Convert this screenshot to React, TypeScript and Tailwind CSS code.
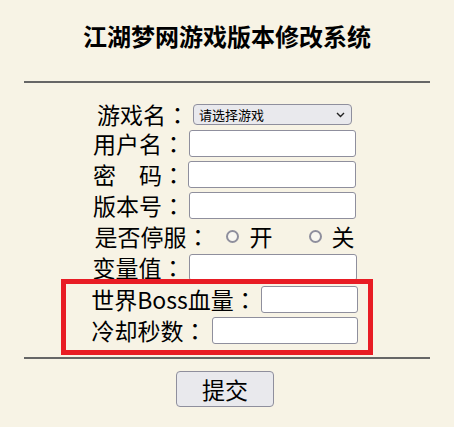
import React from "react";

const font = { fontFamily: '"Noto Sans CJK SC", "Noto Sans", sans-serif' };
const jp = { fontFamily: '"Noto Sans CJK JP", "Noto Sans CJK SC", sans-serif' };

function TextInput({ w }: { w: string }) {
  return (
    <input
      type="text"
      className={`${w} h-[27px] bg-white border border-[#8f8f9d] rounded-[3px] outline-none`}
    />
  );
}

function Radio() {
  return <span className="inline-block w-[13px] h-[13px] rounded-full border-2 border-[#8f8f9d] bg-[#f9f7f0]" />;
}

function Label({ text, w }: { text: string; w?: string }) {
  return (
    <span className={`${w ?? ""} flex items-center whitespace-nowrap h-[23px] leading-[23px]`}>
      <span>{text}</span>
      <span className="inline-block h-[23px] leading-[23px]" style={jp}>：</span>
    </span>
  );
}

export default function App() {
  return (
    <div
      className="relative w-[454px] h-[427px] bg-[#f7f3e5] text-black overflow-hidden"
      style={font}
    >
      <div className="pt-[22px] text-center text-[24px] leading-[28px] font-bold">江湖梦网游戏版本修改系统</div>
      <div className="mt-[31px] mx-[24px] border-t-2 border-[#666]" />

      <div className="flex flex-col pr-[5px] text-[23px]">
        <div className="mt-[18px] h-[27px] flex items-center justify-center">
          <Label text="游戏名" w="w-[92px]" />
          <div className="ml-[4px] w-[159px] h-[21px] flex items-center justify-between pl-[5px] pr-[6px] bg-[#e9e9ed] border border-[#8f8f9d] rounded-[4px] text-[13px] leading-[16px]">
            <span>请选择游戏</span>
            <svg width="9" height="6" viewBox="0 0 9 6" fill="none">
              <path d="M1 1l3.5 3.5L8 1" stroke="#222" strokeWidth="1.4" />
            </svg>
          </div>
        </div>
        <div className="mt-[2px] h-[27px] flex items-center justify-center">
          <Label text="用户名" w="w-[92px]" />
          <div className="ml-[4px]"><TextInput w="w-[167px]" /></div>
        </div>
        <div className="mt-[4px] h-[27px] flex items-center justify-center">
          <Label text="密　码" w="w-[92px]" />
          <div className="ml-[3px]"><TextInput w="w-[168px]" /></div>
        </div>
        <div className="mt-[4px] h-[27px] flex items-center justify-center">
          <Label text="版本号" w="w-[92px]" />
          <div className="ml-[4px]"><TextInput w="w-[167px]" /></div>
        </div>
        <div className="mt-[2px] h-[30px] flex items-center justify-center">
          <Label text="是否停服" w="w-[115px]" />
          <span className="ml-[16px] flex items-center"><Radio /></span>
          <span className="ml-[11px] leading-[23px]">开</span>
          <span className="ml-[36px] flex items-center"><Radio /></span>
          <span className="ml-[10px] leading-[23px]">关</span>
        </div>
        <div className="mt-[3px] h-[27px] flex items-center justify-center">
          <Label text="变量值" w="w-[92px]" />
          <div className="ml-[4px]"><TextInput w="w-[168px]" /></div>
        </div>
        <div className="mt-[5px] h-[27px] flex items-center justify-center">
          <Label text="世界Boss血量" />
          <div className="ml-[4px]"><TextInput w="w-[97px]" /></div>
        </div>
        <div className="mt-[4px] h-[27px] flex items-center justify-center">
          <Label text="冷却秒数" w="w-[115px]" />
          <div className="ml-[5px]"><TextInput w="w-[146px]" /></div>
        </div>
      </div>

      <div className="mt-[13px] mx-[24px] border-t-2 border-[#666]" />
      <div className="mt-[12px] pr-[4px] flex justify-center">
        <button className="w-[98px] h-[36px] bg-[#e9e9ed] border border-[#8f8f9d] rounded-[4px] text-[23px] leading-[28px]">
          提交
        </button>
      </div>

      <div className="absolute left-[61px] top-[279px] w-[312px] h-[76px] border-[5px] border-[#e81c24] pointer-events-none" />
    </div>
  );
}
